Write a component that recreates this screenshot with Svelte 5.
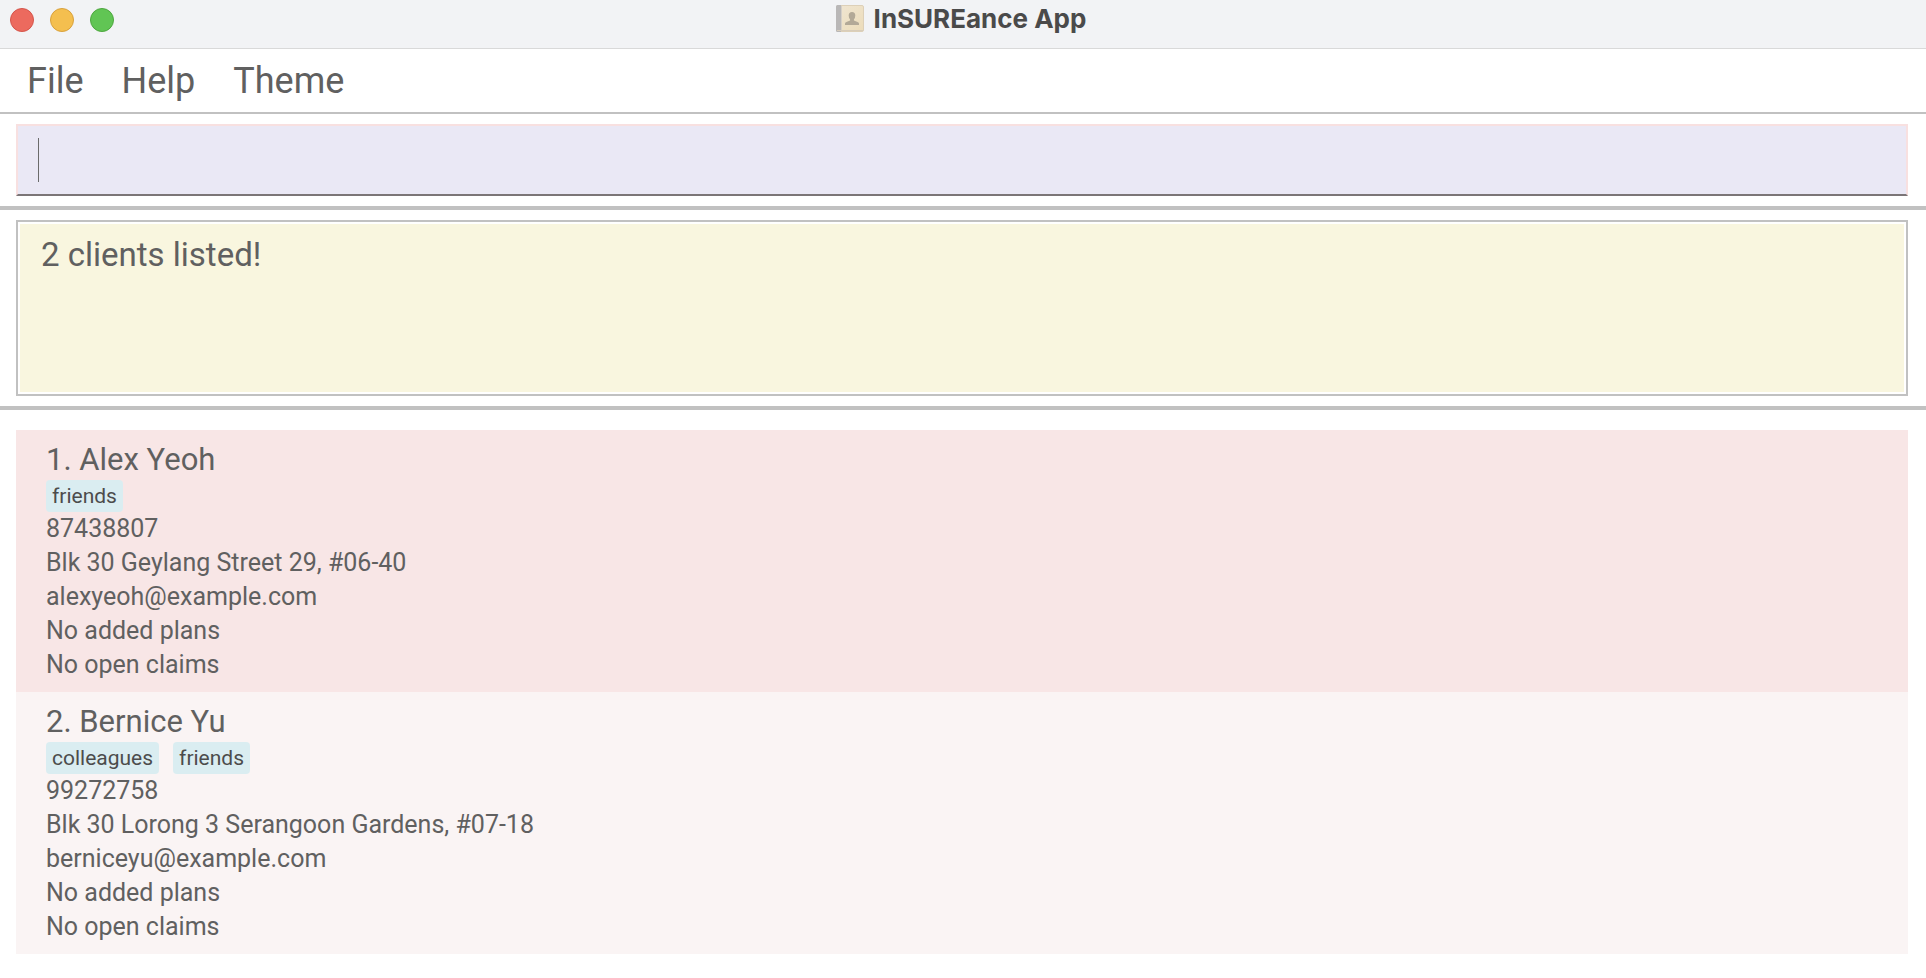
<script>
  const menus = ['File', 'Help', 'Theme'];
  const clients = [
    {
      name: 'Alex Yeoh',
      tags: ['friends'],
      details: ['87438807', 'Blk 30 Geylang Street 29, #06-40', 'alexyeoh@example.com', 'No added plans', 'No open claims']
    },
    {
      name: 'Bernice Yu',
      tags: ['colleagues', 'friends'],
      details: ['99272758', 'Blk 30 Lorong 3 Serangoon Gardens, #07-18', 'berniceyu@example.com', 'No added plans', 'No open claims']
    }
  ];
  let command = $state('');
</script>

<div class="window">
  <header class="titlebar">
    <div class="lights">
      <button class="light red" aria-label="Close"></button>
      <button class="light amber" aria-label="Minimise"></button>
      <button class="light green" aria-label="Zoom"></button>
    </div>
    <h1>
      <svg width="28" height="27" viewBox="0 0 28 27" aria-hidden="true">
        <defs>
          <linearGradient id="cover" x1="0" y1="0" x2="1" y2="1">
            <stop offset="0" stop-color="#f0e6d3" />
            <stop offset="1" stop-color="#ecdcb9" />
          </linearGradient>
        </defs>
        <rect x="0.5" y="0.5" width="27" height="26" rx="1.5" fill="url(#cover)" stroke="#ddd0b8" />
        <path d="M1.5 0H5v27H1.5Q0 27 0 25.500V1.500Q0 0 1.500 0Z" fill="#b9b7b7" />
        <path d="M5.500 1V26" stroke="#d6d0c8" />
        <path d="M1 25.500H27" stroke="#d8cdbb" />
        <path d="M9 20v-1.500q0-1.200 2-1.800l2.600-1q.8-.5.4-1.500q-1.300-1.500-1.300-3.700q0-3.500 3.300-3.500t3.300 3.500q0 2.200-1.300 3.700q-.4 1 .4 1.500l2.600 1q2 .6 2 1.800V20Z" fill="#b3a997" />
      </svg>
      <span>InSUREance App</span>
    </h1>
  </header>

  <nav class="menubar">
    {#each menus as menu}
      <button>{menu}</button>
    {/each}
  </nav>

  <div class="pane">
    <div class="field">
      <input type="text" aria-label="Command" bind:value={command} />
      {#if command === ''}<span class="caret"></span>{/if}
    </div>
  </div>

  <div class="pane">
    <div class="frame">
      <output>2 clients listed!</output>
    </div>
  </div>

  <ol class="clients">
    {#each clients as client, i}
      <li>
        <h2>{i + 1}. {client.name}</h2>
        <div class="tags">
          {#each client.tags as tag}
            <span class="tag">{tag}</span>
          {/each}
        </div>
        {#each client.details as line}
          <p>{line}</p>
        {/each}
      </li>
    {/each}
  </ol>
</div>

<style>
  :global(body) {
    margin: 0;
    background: #fff;
  }
  .window {
    min-height: 100vh;
    box-sizing: border-box;
    font-family: Roboto, Inter, sans-serif;
    color: #606060;
    background: #fff;
  }
  .titlebar {
    display: grid;
    grid-template-columns: 1fr auto 1fr;
    height: 48px;
    background: #f2f3f5;
    border-bottom: 1px solid #d9d9d9;
  }
  .lights {
    display: flex;
    gap: 16px;
    padding: 8px 0 0 10px;
  }
  .light {
    width: 24px;
    height: 24px;
    box-sizing: border-box;
    padding: 0;
    border: 1px solid;
    border-radius: 50%;
  }
  .red {
    background: #ec6a5e;
    border-color: #d5554b;
  }
  .amber {
    background: #f4bf4f;
    border-color: #d9a13c;
  }
  .green {
    background: #61c554;
    border-color: #4ea73f;
  }
  h1 {
    display: flex;
    align-items: flex-start;
    gap: 10px;
    margin: 0;
    padding: 5px 4px 0 0;
    font-family: Inter, sans-serif;
    font-size: 26px;
    line-height: 28px;
    font-weight: 700;
    color: #4a4a4a;
  }
  .menubar {
    display: flex;
    height: 63px;
    padding-left: 8px;
    border-bottom: 2px solid #c1c1c1;
  }
  .menubar button {
    padding: 0 19px;
    border: 0;
    background: none;
    font: inherit;
    font-size: 36px;
    color: inherit;
  }
  .pane {
    padding: 10px 18px 10px 16px;
    border-bottom: 4px solid #c1c1c1;
  }
  .field {
    position: relative;
  }
  input {
    display: block;
    width: 100%;
    height: 72px;
    box-sizing: border-box;
    padding: 0 20px;
    border: 2px solid #f8e0e0;
    border-bottom-color: #7b7577;
    border-radius: 0;
    outline: none;
    background: #eae8f5;
    font: inherit;
    font-size: 33px;
    color: inherit;
  }
  .caret {
    position: absolute;
    top: 14px;
    left: 22px;
    width: 1px;
    height: 44px;
    background: #6b6b6b;
  }
  .frame {
    padding: 2px;
    border: 2px solid #c1c1c1;
  }
  output {
    display: block;
    min-height: 168px;
    box-sizing: border-box;
    padding: 10px 21px;
    background: #f9f6df;
    font-size: 33px;
    line-height: 42px;
  }
  .clients {
    list-style: none;
    margin: 0;
    padding: 20px 18px 24px 16px;
  }
  li {
    padding: 10px 30px;
    background: #f8e6e6;
  }
  li:nth-child(even) {
    background: #faf4f4;
  }
  h2 {
    margin: 0;
    font-size: 31px;
    line-height: 40px;
    font-weight: 400;
  }
  .tags {
    display: flex;
    gap: 14px;
  }
  .tag {
    padding: 1px 6px 0;
    border-radius: 4px;
    background: #daedf1;
    font-size: 21px;
    line-height: 31px;
    color: #4c4c4c;
  }
  p {
    margin: 0;
    font-size: 25px;
    line-height: 34px;
  }
</style>
